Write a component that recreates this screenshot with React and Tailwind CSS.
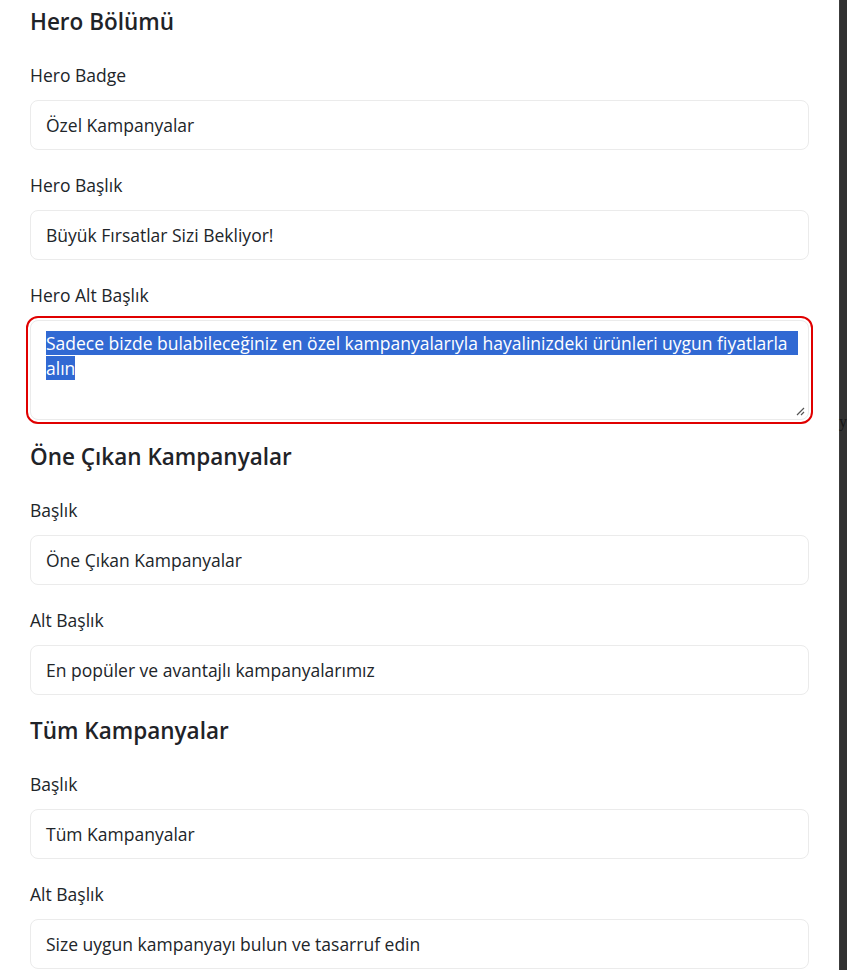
import React from "react";

const font = { fontFamily: '"Open Sans", "Noto Sans", sans-serif' };

function Field({ label, value }) {
  return (
    <div className="mb-[23px]">
      <div className="text-[17.5px] leading-[24px] text-[#212529] mb-[13px]">{label}</div>
      <div className="h-[50px] rounded-lg border border-[#ebebeb] bg-white px-[15px] flex items-center text-[17.5px] text-[#212529]">
        {value}
      </div>
    </div>
  );
}

function Heading({ children, first }) {
  return (
    <h3 className={`text-[22.5px] leading-[26px] font-semibold text-[#1f2328] mb-7 ${first ? "" : "mt-px"}`}>
      {children}
    </h3>
  );
}

export default function App() {
  return (
    <div className="flex w-[847px] h-[970px] overflow-hidden bg-white" style={font}>
      <div className="w-[839px] px-[30px] pt-[9px]">
        <Heading first>Hero Bölümü</Heading>
        <Field label="Hero Badge" value="Özel Kampanyalar" />
        <Field label="Hero Başlık" value="Büyük Fırsatlar Sizi Bekliyor!" />
        <div className="mb-[24px]">
          <div className="text-[17.5px] leading-[24px] text-[#212529] mb-[13px]">Hero Alt Başlık</div>
          <div className="relative h-[100px] rounded-lg border border-[#ebebeb] bg-white outline-2 outline-[#e00000] outline-offset-[2px] px-[15px] pt-[10px] text-[17.5px] leading-[25px] text-[#212529]">
            <span className="bg-[#3169d3] text-white pr-[10px] whitespace-nowrap">Sadece bizde bulabileceğiniz en özel kampanyalarıyla hayalinizdeki ürünleri uygun fiyatlarla</span>
            <br />
            <span className="bg-[#3169d3] text-white">alın</span>
            <svg className="absolute right-[3px] bottom-[3px]" width="9" height="9" viewBox="0 0 9 9">
              <path d="M8 1 L1 8 M8 5 L5 8" stroke="#555" strokeWidth="1.2" />
            </svg>
          </div>
        </div>
        <Heading>Öne Çıkan Kampanyalar</Heading>
        <Field label="Başlık" value="Öne Çıkan Kampanyalar" />
        <Field label="Alt Başlık" value="En popüler ve avantajlı kampanyalarımız" />
        <Heading>Tüm Kampanyalar</Heading>
        <Field label="Başlık" value="Tüm Kampanyalar" />
        <Field label="Alt Başlık" value="Size uygun kampanyayı bulun ve tasarruf edin" />
      </div>
      <div className="relative w-[8px] h-full bg-[#323232] border-l border-[#3c3c3c]">
        <span className="absolute left-[-1px] top-[410px] text-[16px] text-[#151515]" style={{ fontFamily: '"Liberation Serif", serif' }}>y</span>
      </div>
    </div>
  );
}
